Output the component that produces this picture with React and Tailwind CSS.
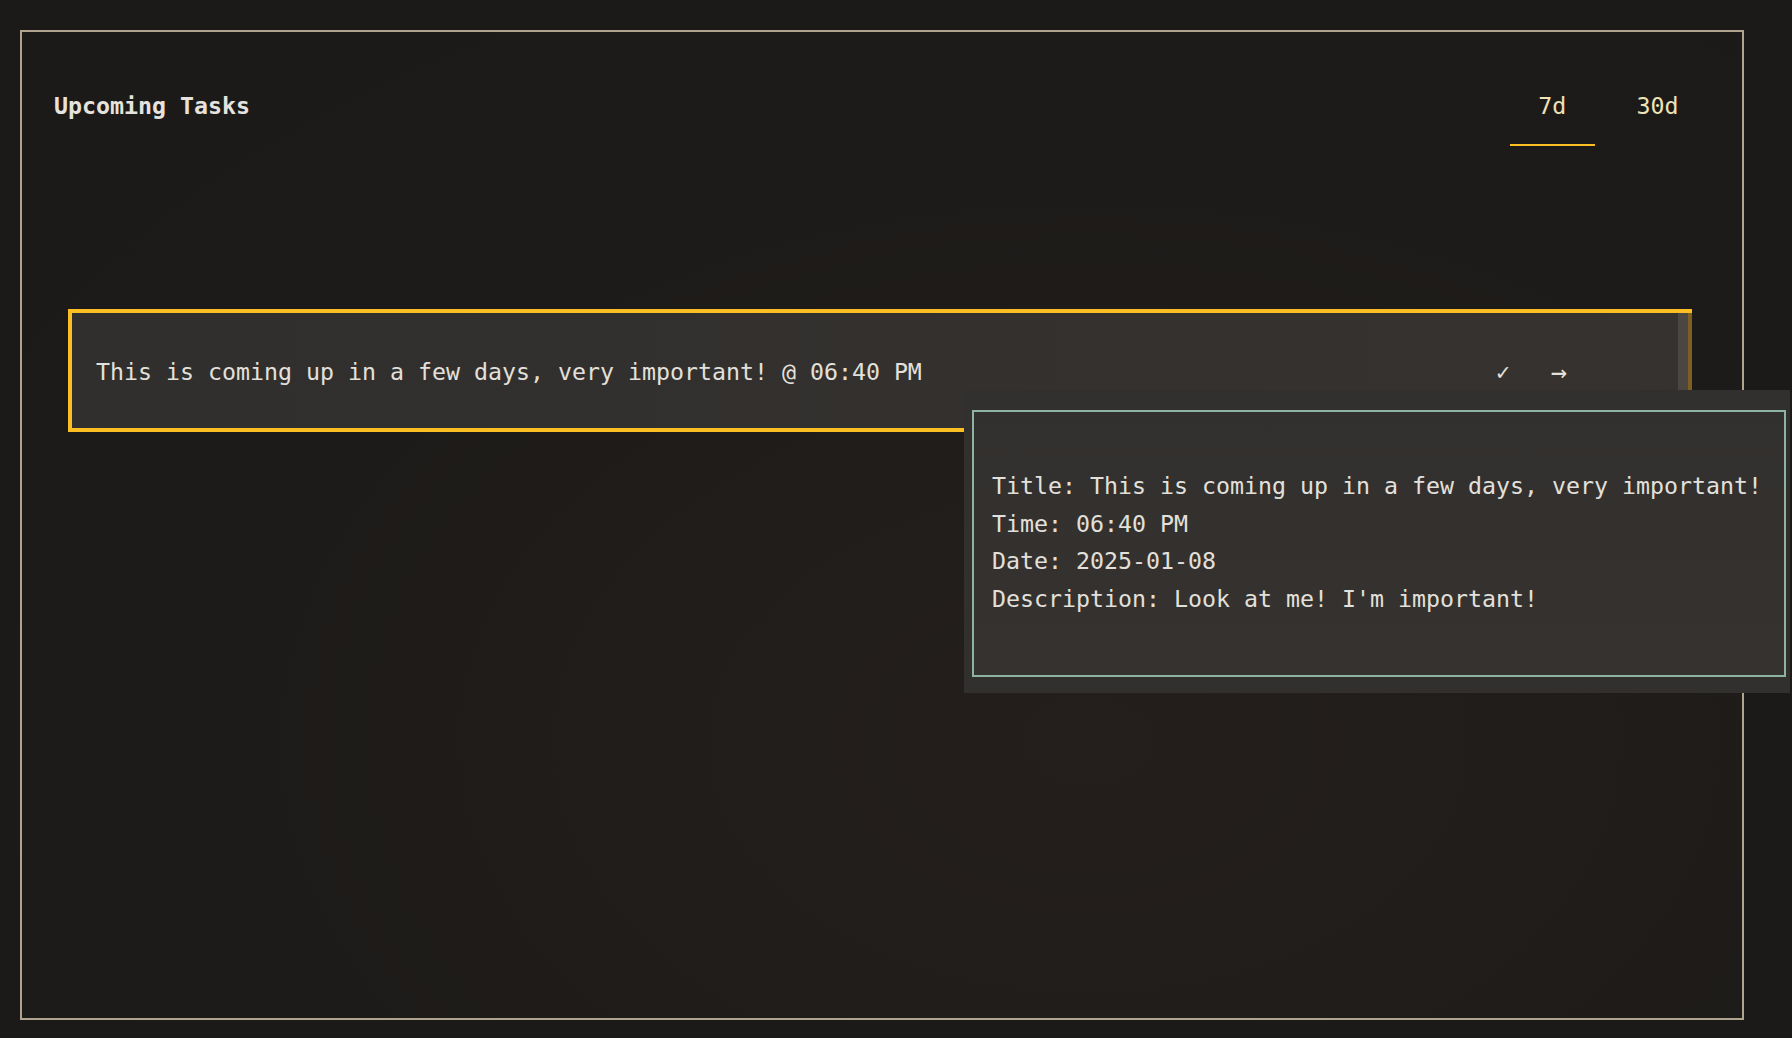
import { useState } from "react";

const MONO = "font-['DejaVu_Sans_Mono','Liberation_Mono',monospace]";

const TASK = {
  title: "This is coming up in a few days, very important!",
  time: "06:40 PM",
  date: "2025-01-08",
  description: "Look at me! I'm important!",
};

export default function App() {
  const [range, setRange] = useState("7d");

  return (
    <div
      className={`relative min-h-screen h-[1038px] overflow-hidden bg-[#1c1a18] pt-[30px] pl-[20px] text-[23.25px] ${MONO}`}
    >
      {/* Panel */}
      <div className="w-[1724px] h-[990px] border-2 border-[#b0a48f] bg-[radial-gradient(ellipse_at_62%_72%,#241f1c_0%,#1d1b19_55%,#1c1a18_100%)]">
        {/* Header */}
        <div className="flex items-center justify-between pt-[37px] pl-[32px] pr-[35px]">
          <h2 className="font-bold leading-[1.5] text-[#e6e3de] -translate-y-[1px]">
            Upcoming Tasks
          </h2>
          <div className="flex gap-[13px]">
            {["7d", "30d"].map((r) => (
              <button
                key={r}
                onClick={() => setRange(r)}
                className={`px-[28.6px] py-[20px] leading-[1.5] text-[#efe2b6] border-b-2 ${
                  range === r ? "border-[#fbbf24]" : "border-transparent"
                }`}
              >
                {r}
              </button>
            ))}
          </div>
        </div>

        {/* Task list */}
        <div className="pt-[163px] pl-[46px] pr-[50px]">
          <div className="relative flex items-center h-[123px] border-4 border-[#fbbf24] bg-gradient-to-r from-[#302f2d] to-[#363230] pl-[24px] pt-[2px] text-[#e3e0db] leading-[1.6]">
            <span className="flex-1">
              {TASK.title} @ {TASK.time}
            </span>
            <div className="flex items-center mr-[101px]">
              <button className="w-[56px] text-center font-bold">✓</button>
              <button className="w-[56px] text-center text-[27px] leading-none">→</button>
            </div>
            {/* scroll strip */}
            <div className="absolute top-0 bottom-0 right-[-4px] flex w-[14px]">
              <div className="w-[10px] bg-[#4b4642]" />
              <div className="w-[4px] bg-[#7d5f22]" />
            </div>
          </div>
        </div>
      </div>

      {/* Tooltip */}
      <div className="absolute left-[964px] top-[390px] w-max bg-[#32302e] pt-[20px] pl-[8px] pr-[4px] pb-[16px]">
        <div className="border-2 border-[#8db3a3] bg-gradient-to-b from-[#32302e] to-[#353230] pl-[18px] pr-[22px] pt-[55px] pb-[57px] leading-[37.7px] text-[#e3e0db] whitespace-nowrap">
          <div>Title: {TASK.title}</div>
          <div>Time: {TASK.time}</div>
          <div>Date: {TASK.date}</div>
          <div>Description: {TASK.description}</div>
        </div>
      </div>
    </div>
  );
}
